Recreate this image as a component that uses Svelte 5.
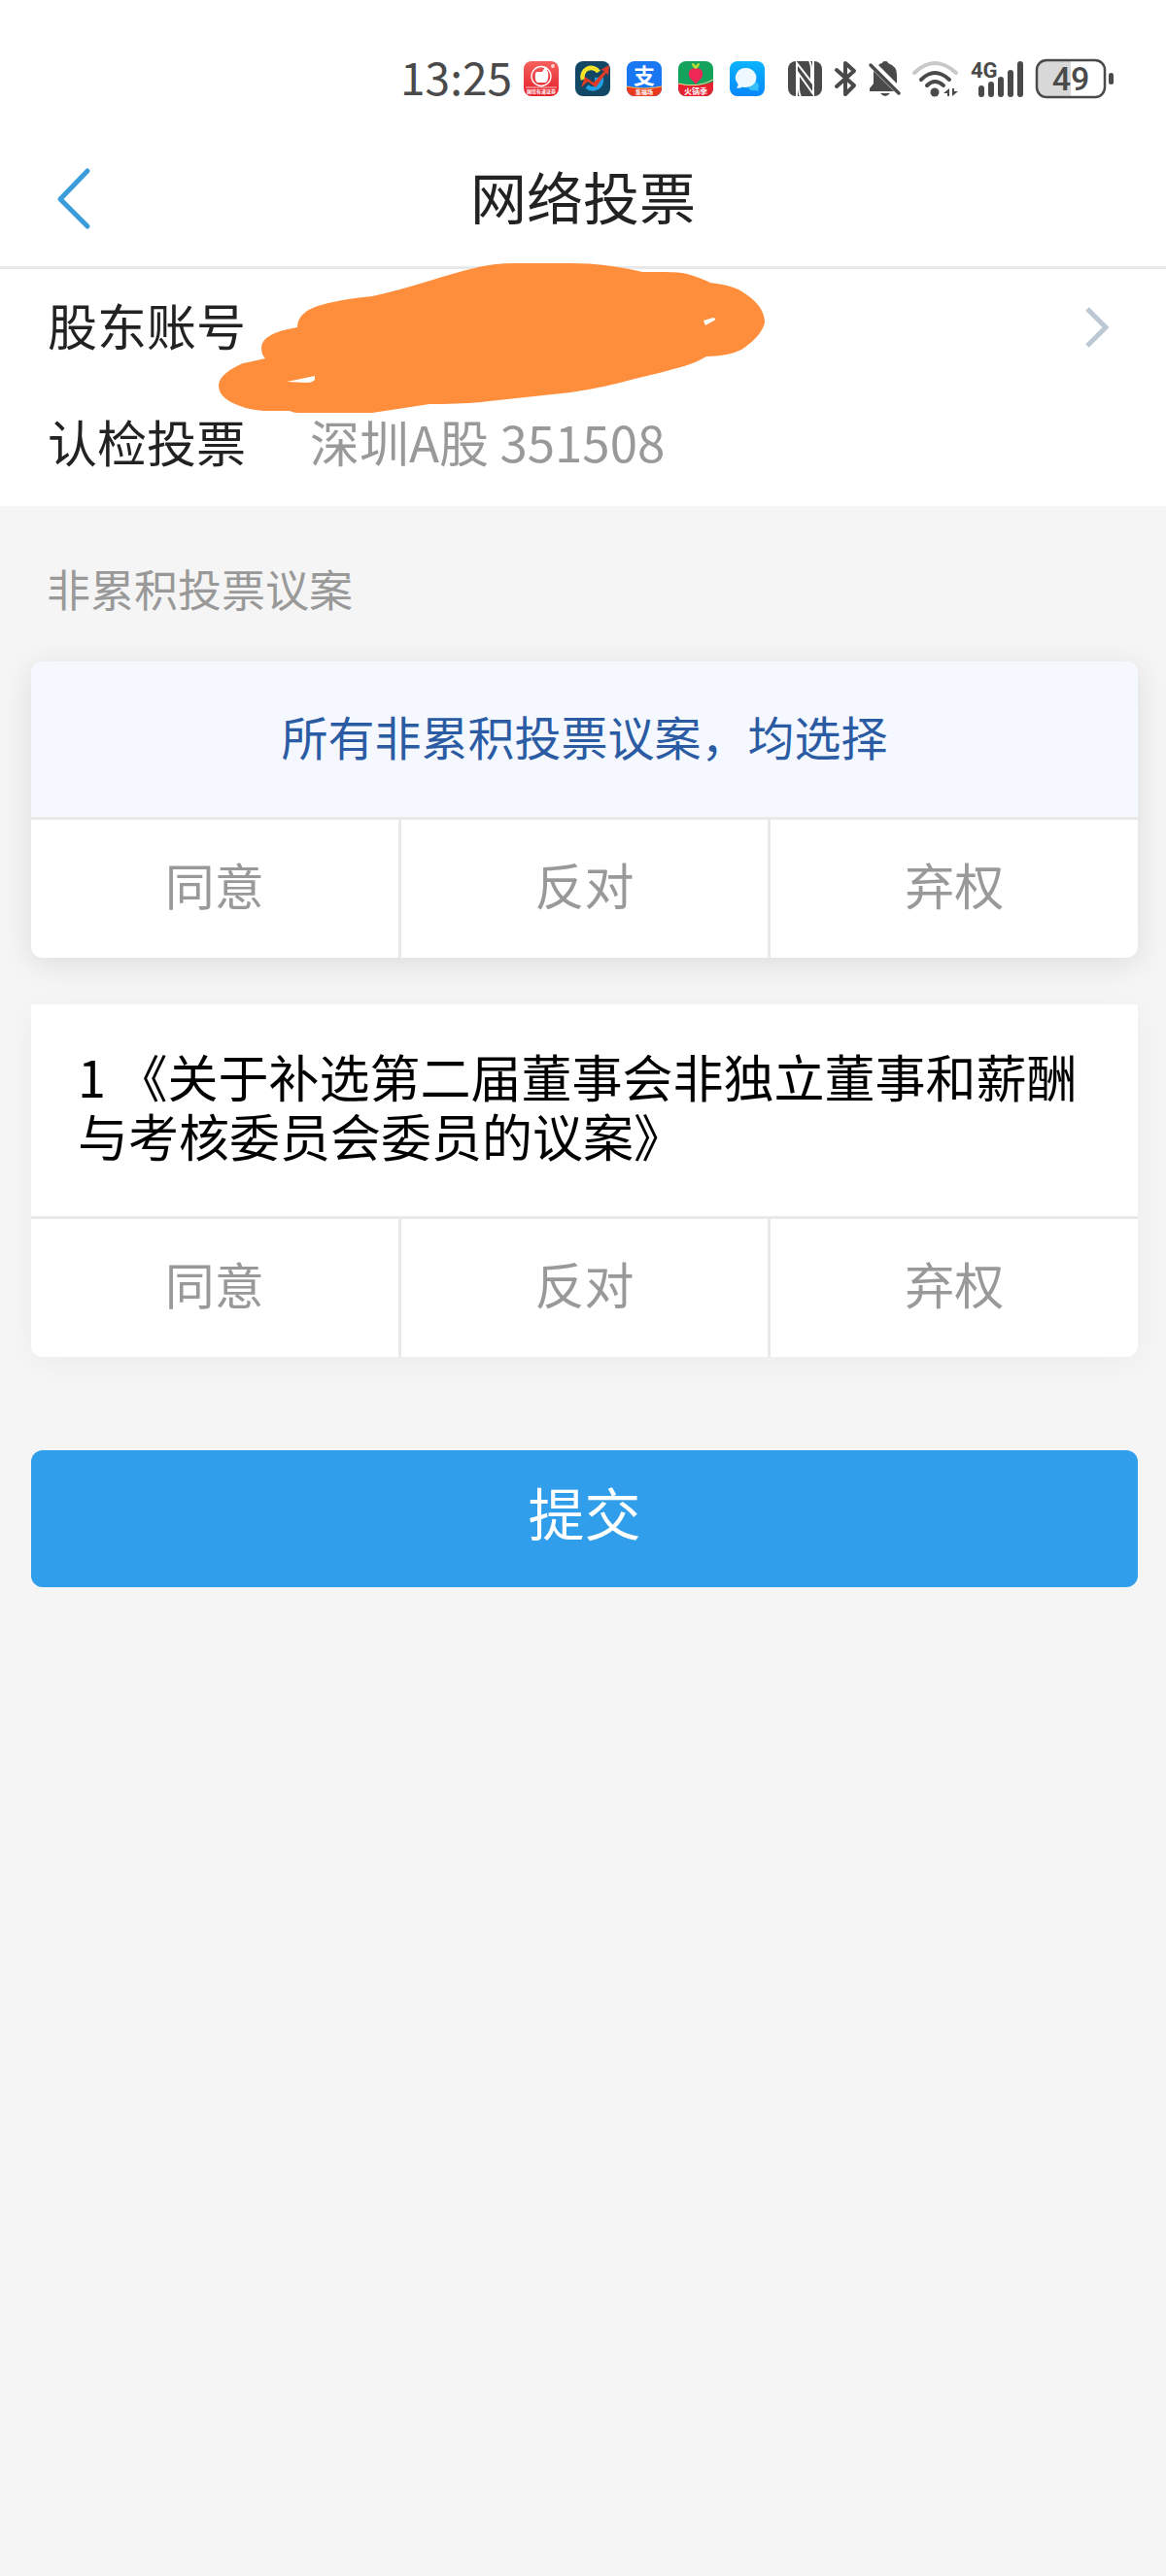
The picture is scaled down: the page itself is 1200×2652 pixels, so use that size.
<script>
  const options = ['同意', '反对', '弃权'];

  const account = {
    name: '认检投票',
    market: '深圳A股 351508',
  };

  const proposals = [
    { id: 1, title: '《关于补选第二届董事会非独立董事和薪酬与考核委员会委员的议案》' },
  ];

  /** @type {Record<number, string>} */
  let votes = $state({});

  let allChoice = $derived(
    options.find(o => proposals.every(p => votes[p.id] === o))
  );

  /** @param {string} option */
  function voteAll(option) {
    for (const p of proposals) votes[p.id] = option;
  }
</script>

<div class="page">
  <header>
    <div class="status-bar">
      <span class="time">13:25</span>

      <div class="apps">
        <svg viewBox="0 0 36 36" aria-hidden="true">
          <defs>
            <linearGradient id="red" x1="0" y1="0" x2="0" y2="1">
              <stop offset="0" stop-color="#f4605c" />
              <stop offset="1" stop-color="#e5202c" />
            </linearGradient>
          </defs>
          <rect width="36" height="36" rx="8" fill="url(#red)" />
          <circle cx="18" cy="15.500" r="10" fill="none" stroke="#fff" stroke-width="1.300" />
          <path d="M12 13q0-2 2-2h5l3-5q3 0 2 4l1 1q1 8-2 11h-9q-3-2-2-9z" fill="#fff" />
          <circle cx="30" cy="5" r="2" fill="#ffd0cc" />
          <path d="M2 27h32" stroke="#fff" stroke-width="0.700" />
          <text x="18" y="33" class="app-text" font-size="5">国信有道证券</text>
        </svg>
        <svg viewBox="0 0 36 36" aria-hidden="true">
          <rect width="36" height="36" rx="8" fill="#124866" />
          <path d="M8 19a9 9 0 0 1 16-8" fill="none" stroke="#f5e32a" stroke-width="4.500" />
          <path d="M12 26a9 9 0 0 0 15-7h-7" fill="none" stroke="#1fa0e6" stroke-width="4.500" />
          <path d="M6 27l4-11 9 6L30 10l-4-1 9-5-1 11-2-3-11 15-8-6z" fill="#df3b26" />
        </svg>
        <svg viewBox="0 0 36 36" aria-hidden="true">
          <defs>
            <clipPath id="app-clip"><rect width="36" height="36" rx="8" /></clipPath>
          </defs>
          <g clip-path="url(#app-clip)">
            <rect width="36" height="36" fill="#1977f2" />
            <path d="M0 26q18 4 36 0v10H0z" fill="#e9391f" />
            <path d="M0 26q18 4 36 0" fill="none" stroke="#ffb84a" stroke-width="1.200" />
          </g>
          <text x="18" y="23" class="app-text" font-size="22">支</text>
          <text x="18" y="34" class="app-text" font-size="6">集福场</text>
        </svg>
        <svg viewBox="0 0 36 36" aria-hidden="true">
          <g clip-path="url(#app-clip)">
            <rect width="36" height="36" fill="#13a35c" />
            <path d="M0 23q20 5 36-2v15H0z" fill="#e8202f" />
            <path d="M0 23q20 5 36-4" fill="none" stroke="#f6d79b" stroke-width="1" />
            <path d="M18 7c6 0 8 4 7 8-1 4-5 5-7 9-2-4-6-5-7-9-1-4 1-8 7-8z" fill="#ef2754" />
            <path d="M18 8q-4-2-4-6 3 0 4 3 1-3 4-3 0 4-4 6z" fill="#b6dc3c" />
          </g>
          <text x="18" y="34" class="app-text" font-size="8">火锅季</text>
        </svg>
        <svg viewBox="0 0 36 36" aria-hidden="true">
          <defs>
            <linearGradient id="blue" x1="0" y1="0" x2="0" y2="1">
              <stop offset="0" stop-color="#0ab4fb" />
              <stop offset="1" stop-color="#0787fb" />
            </linearGradient>
          </defs>
          <rect width="36" height="36" rx="8" fill="url(#blue)" />
          <path d="M24 20a6 6 0 0 1 5 9l1 2-4-1a6 6 0 0 1-7-3z" fill="#35c0fb" />
          <path d="M17 7a11 10 0 1 1-4 19.500q-3 2-6 1 2-2 1.500-4A10.500 10 0 0 1 17 7z" fill="#eef8ff" />
        </svg>
      </div>

      <div class="system">
        <svg width="35" height="36" viewBox="0 0 35 36" aria-hidden="true">
          <rect width="35" height="36" rx="8" fill="#4a4a4a" />
          <path d="M9 36V2l15 19V9q0-6-2-9M26 0v34L11 13v14q0 6 2 9" fill="none" stroke="#fff" stroke-width="2" />
        </svg>
        <svg width="24" height="38" viewBox="0 0 24 38" aria-hidden="true">
          <path d="M3 10l18 16-9 9V3l9 8L3 27" fill="none" stroke="#4a4a4a" stroke-width="4" stroke-linejoin="round" stroke-linecap="round" />
        </svg>
        <svg width="33" height="38" viewBox="0 0 33 38" aria-hidden="true">
          <path d="M10 5q2-2 4-2 0-2 3-2t3 2q9 3 9 12v9z" fill="#4a4a4a" />
          <path d="M5 11L26 32H1v-3l4-5z" fill="#4a4a4a" />
          <path d="M2 5l29 29" stroke="#4a4a4a" stroke-width="3.500" stroke-linecap="round" />
          <path d="M12 34h10q-5 6-10 0z" fill="#4a4a4a" />
        </svg>
        <svg width="48" height="38" viewBox="0 0 48 38" aria-hidden="true">
          <g fill="none" stroke-width="4" stroke-linecap="round">
            <path d="M2 13q21-20 43 0" stroke="#c8c8c8" />
            <path d="M9 20q14-14 29 0M15 26q8-8 17 0" stroke="#4a4a4a" />
          </g>
          <circle cx="23" cy="33" r="4.500" fill="#4a4a4a" />
          <path d="M38 29v8h-2v-3h-4zM41 29v8l6-5h-4v-3z" fill="#4a4a4a" />
        </svg>
        <svg width="55" height="44" viewBox="0 -3 55 44" aria-hidden="true">
          <text x="0" y="18" class="network">4G</text>
          <path d="M11 29v6M21 25v10M31 20v15M41 13v22M51 4v31" stroke="#4a4a4a" stroke-width="6" stroke-linecap="round" />
        </svg>
        <svg width="80" height="42" viewBox="0 0 80 42" aria-hidden="true">
          <rect x="1" y="2" width="70" height="38" rx="10" fill="#fff" />
          <path d="M11 2h25v38H11a10 10 0 0 1-10-10V12A10 10 0 0 1 11 2z" fill="#d8d8d8" />
          <rect x="1" y="2" width="70" height="38" rx="10" fill="none" stroke="#4a4a4a" stroke-width="2.500" />
          <rect x="75" y="15" width="5" height="12" rx="2.500" fill="#4a4a4a" />
          <text x="36" y="33" class="battery">49</text>
        </svg>
      </div>
    </div>

    <nav>
      <button class="back" aria-label="返回">
        <svg width="36" height="64" viewBox="0 0 36 64" aria-hidden="true">
          <path d="M32 5L4 34l28 28" fill="none" stroke="#3b9cdc" stroke-width="5" stroke-linecap="round" stroke-linejoin="round" />
        </svg>
      </button>
      <h1>网络投票</h1>
    </nav>
  </header>

  <section class="account">
    <button class="row">
      <span class="label">股东账号</span>
      <svg class="arrow" width="26" height="60" viewBox="0 0 26 60" aria-hidden="true">
        <path d="M3 14l19 19L3 52" fill="none" stroke="#bcc8d4" stroke-width="5" />
      </svg>
    </button>
    <div class="row">
      <span class="label">{account.name}</span>
      <span class="value">{account.market}</span>
    </div>
    <svg class="scribble" viewBox="225 271 563 155" aria-hidden="true">
      <path
        fill="#ff8e3c"
        fill-rule="evenodd"
        d="M306 337Q306 322 327 315Q350 308 383 305Q410 299 439 290Q465 282 480 278Q505 271 530 271H587Q608 271 622 273Q645 276 661 280H684Q701 280 707 282Q721 286 731 291Q749 293 760 298Q787 313 787 332Q784 346 763 360Q749 367 727 367Q717 373 704 377Q680 384 653 390Q622 399 587 404L495 414Q470 416 442 416L383 425H306Q302 425 298 423H278Q262 423 250 419Q225 411 225 397Q225 385 250 374L273 369Q269 365 269 358Q269 343 306 337ZM295 393L324 387V391Q321 394 316 394ZM724 330L734 327Q738 328 735 330L726 335Z"
      />
    </svg>
  </section>

  <main>
    <h2>非累积投票议案</h2>

    <div class="card all">
      <div class="all-title">所有非累积投票议案，均选择</div>
      <div class="options">
        {#each options as option}
          <button class:selected={allChoice === option} onclick={() => voteAll(option)}>{option}</button>
        {/each}
      </div>
    </div>

    {#each proposals as proposal}
      <div class="card proposal">
        <p>{proposal.id} {proposal.title}</p>
        <div class="options">
          {#each options as option}
            <button
              class:selected={votes[proposal.id] === option}
              onclick={() => votes[proposal.id] = option}
            >{option}</button>
          {/each}
        </div>
      </div>
    {/each}

    <button class="submit">提交</button>
  </main>
</div>

<style>
  :global(body) {
    margin: 0;
    background: #f5f5f5;
  }

  .page {
    font-family: "Noto Sans CJK SC", "Noto Sans", sans-serif;
    color: #222;
  }

  button {
    margin: 0;
    padding: 0;
    border: none;
    background: none;
    font: inherit;
    color: inherit;
    cursor: pointer;
  }

  svg {
    display: block;
    flex: none;
    overflow: visible;
  }

  header {
    background: #fff;
    border-bottom: 3px solid #e9e9e9;
  }

  .status-bar {
    display: flex;
    align-items: center;
    justify-content: flex-end;
    height: 102px;
    padding: 30px 54px 0 0;
  }

  .time {
    padding-bottom: 6px;
    margin-right: 12px;
    font-size: 46px;
    line-height: 60px;
    color: #4a4a4a;
  }

  .apps {
    display: flex;
    gap: 17px;
    margin-right: 24px;
  }

  .apps svg {
    width: 36px;
    height: 36px;
  }

  .app-text {
    fill: #fff;
    font-weight: 700;
    text-anchor: middle;
  }

  .system {
    display: flex;
    align-items: center;
    gap: 12px;
  }

  .network {
    fill: #4a4a4a;
    font-family: Roboto, sans-serif;
    font-size: 22px;
    font-weight: 700;
  }

  .battery {
    fill: #4a4a4a;
    font-family: Roboto, sans-serif;
    font-size: 34px;
    font-weight: 500;
    text-anchor: middle;
  }

  nav {
    position: relative;
    display: flex;
    align-items: center;
    justify-content: center;
    height: 142px;
  }

  .back {
    position: absolute;
    left: 58px;
  }

  h1 {
    margin: 0;
    padding-bottom: 4px;
    font-size: 58px;
    font-weight: 400;
    line-height: 72px;
  }

  .account {
    position: relative;
    display: flex;
    flex-direction: column;
    gap: 60px;
    padding: 27px 58px 37px 49px;
    background: #fff;
  }

  .row {
    display: flex;
    align-items: center;
    gap: 66px;
    font-size: 51px;
    line-height: 60px;
    text-align: left;
  }

  .arrow {
    margin-left: auto;
  }

  .value {
    color: #999;
  }

  .scribble {
    position: absolute;
    top: -6px;
    left: 225px;
    width: 563px;
    height: 155px;
    pointer-events: none;
  }

  main {
    padding: 55px 29px 48px 32px;
  }

  h2 {
    margin: 0 0 45px 16px;
    font-size: 45px;
    font-weight: 400;
    line-height: 60px;
    color: #999;
  }

  .card {
    background: #fff;
    border-radius: 12px;
  }

  .all {
    margin-bottom: 48px;
    box-shadow: 0 6px 32px rgba(0, 0, 0, 0.1);
  }

  .all-title {
    padding: 46px 0 54px;
    border-radius: 12px 12px 0 0;
    background: #f5f8ff;
    font-size: 48px;
    line-height: 60px;
    text-align: center;
    color: #2b5ca3;
  }

  .proposal {
    border-radius: 0 0 12px 12px;
    box-shadow: 0 6px 32px rgba(0, 0, 0, 0.04);
  }

  .proposal p {
    margin: 0;
    padding: 43px 48px 53px;
    font-size: 52px;
    line-height: 61px;
    color: #000;
  }

  .options {
    display: flex;
    border-top: 3px solid #e9e9e9;
  }

  .options button {
    flex: 1;
    padding: 36px 0 46px;
    font-size: 51px;
    line-height: 60px;
    color: #999;
  }

  .options button + button {
    border-left: 3px solid #e9e9e9;
  }

  .options .selected {
    color: #309eea;
  }

  .submit {
    width: 100%;
    margin-top: 96px;
    padding: 27px 0 42px;
    border-radius: 12px;
    background: #309eea;
    font-size: 58px;
    line-height: 72px;
    color: #fff;
  }
</style>
